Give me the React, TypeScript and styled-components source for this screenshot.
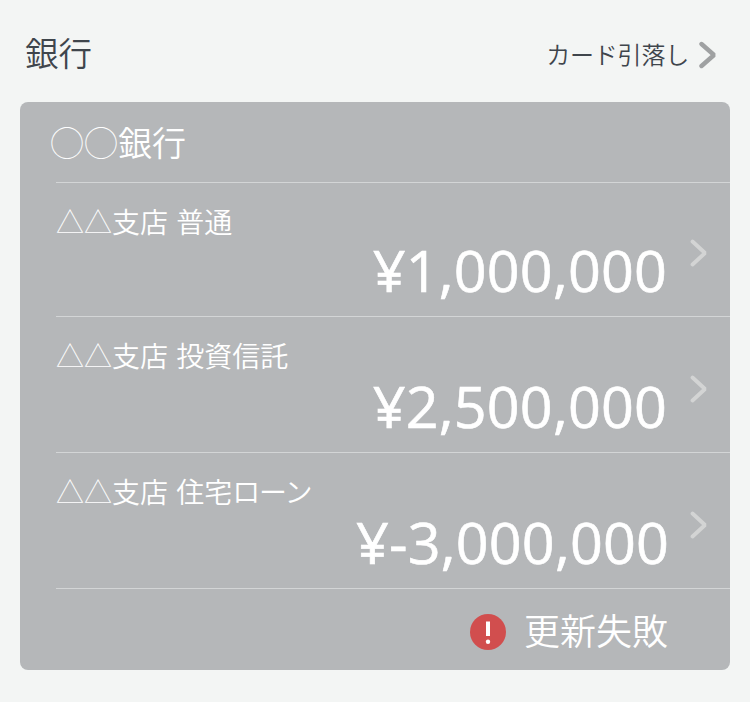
import React from "react";
import styled, { createGlobalStyle } from "styled-components";

const Global = createGlobalStyle`
  * { box-sizing: border-box; }
  body { margin: 0; background: #f3f5f4; font-family: "Noto Sans CJK JP", sans-serif; font-weight: 350; }
`;
const Page = styled.main`
  width: 750px; height: 702px; overflow: hidden; padding: 0 20px;
  background: #f3f5f4; color: #3f454c;
`;
const Header = styled.header`
  height: 102px; padding: 0 12px 0 5px;
  display: flex; justify-content: space-between; align-items: center;
`;
const Title = styled.h1`
  margin: 0; padding-top: 2px; font-size: 33.5px; font-weight: 350; line-height: 44px; white-space: nowrap;
`;
const HeaderLink = styled.a`
  display: flex; align-items: center; gap: 10px; padding-top: 8px;
  font-size: 24px; line-height: 34px; letter-spacing: -0.2px; white-space: nowrap;
`;
const LinkText = styled.span`padding-bottom: 2px;`;
const Card = styled.section`
  height: 568px; border-radius: 8px; background: #b5b7b9; color: #fff;
  display: flex; flex-direction: column; overflow: hidden;
`;
const BankName = styled.h2`
  margin: 0; height: 80px; padding: 17px 0 0 30px; font-size: 34px; font-weight: 350; line-height: 46px; white-space: nowrap;
`;
const Symbols = styled.span`font-weight: 100;`;
const Row = styled.div<{ $h: number }>`
  height: ${p => p.$h}px; margin-left: 36px; border-top: 1px solid #d3d5d6;
  display: grid; grid-template-columns: 1fr 64px;
`;
const Info = styled.div`display: flex; flex-direction: column;`;
const Label = styled.div<{ $h: number }>`
  height: ${p => p.$h}px; padding-top: 18px; font-size: 28px; line-height: 40px; word-spacing: 2px; white-space: nowrap;
`;
const Kana = styled.span`letter-spacing: -1.2px;`;
const Amount = styled.div<{ $shift: number }>`
  align-self: flex-end; margin-right: ${p => -p.$shift}px; font-family: "Open Sans", sans-serif; font-weight: 500;
  font-size: 57.5px; line-height: 62px; letter-spacing: 0.15px; white-space: nowrap; -webkit-text-stroke: 0.6px #fff;
`;
const Arrow = styled.svg<{ $top: number }>`display: block; margin: ${p => p.$top}px 0 0 24px;`;
const Status = styled.footer`
  flex: 1; margin-left: 36px; border-top: 1px solid #d3d5d6; padding: 4px 62px 0 0;
  display: flex; justify-content: flex-end; align-items: center; gap: 18px;
`;
const StatusText = styled.span`padding-bottom: 6px; font-size: 36px; line-height: 46px; white-space: nowrap;`;

const accounts = [
  { branch: "支店 普通", kana: "", amount: "¥1,000,000", h: 134, labelH: 56, shift: 1, arrow: 56 },
  { branch: "支店 投資信託", kana: "", amount: "¥2,500,000", h: 136, labelH: 58, shift: 1, arrow: 58 },
  { branch: "支店 住宅", kana: "ローン", amount: "¥-3,000,000", h: 136, labelH: 58, shift: 3, arrow: 58 },
];

export default function App() {
  return (
    <Page>
      <Global />
      <Header>
        <Title>銀行</Title>
        <HeaderLink>
          <LinkText>カード引落し</LinkText>
          <svg width="19" height="28" viewBox="0 0 19 28" fill="none" stroke="#9fa1a2" strokeWidth="4.4" strokeLinecap="round" strokeLinejoin="bevel"><path d="M2.5 3 15 14 2.5 25" /></svg>
        </HeaderLink>
      </Header>
      <Card>
        <BankName><Symbols>◯◯</Symbols>銀行</BankName>
        {accounts.map(a => (
          <Row key={a.amount} $h={a.h}>
            <Info>
              <Label $h={a.labelH}><Symbols>△△</Symbols>{a.branch}<Kana>{a.kana}</Kana></Label>
              <Amount $shift={a.shift}>{a.amount}</Amount>
            </Info>
            <Arrow $top={a.arrow} width="19" height="28" viewBox="0 0 19 28" fill="none" stroke="#d3d4d4" strokeWidth="3.8" strokeLinecap="round" strokeLinejoin="bevel"><path d="M2.5 2.5 15 14 2.5 25.5" /></Arrow>
          </Row>
        ))}
        <Status>
          <svg width="36" height="36" viewBox="0 0 36 36"><circle cx="18" cy="18" r="18" fill="#d14e4e" /><path d="M16 7.5h4v14.5h-4z" fill="#fff" /><circle cx="18" cy="27.7" r="2.2" fill="#fff" /></svg>
          <StatusText>更新失敗</StatusText>
        </Status>
      </Card>
    </Page>
  );
}
